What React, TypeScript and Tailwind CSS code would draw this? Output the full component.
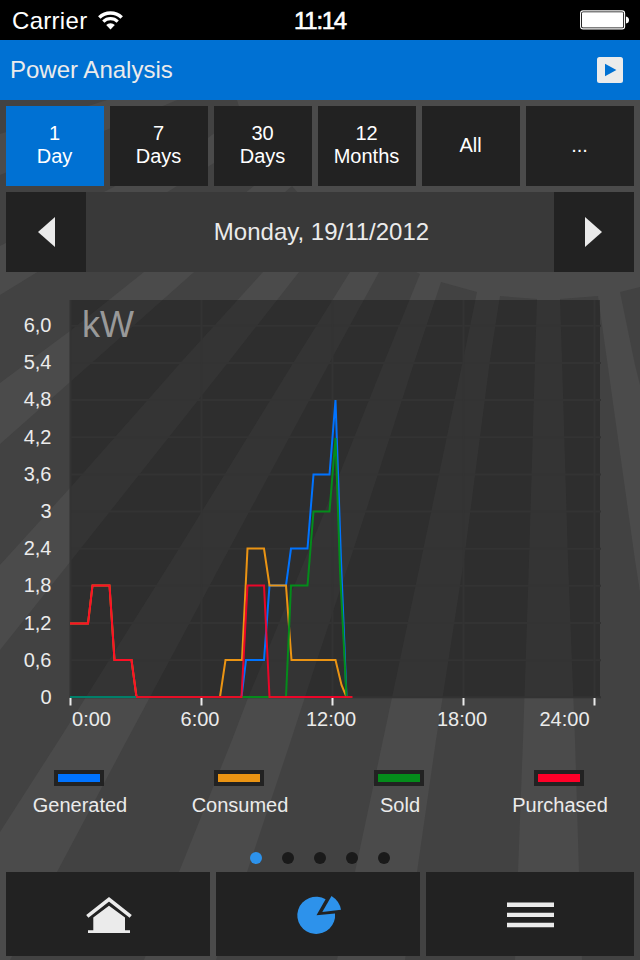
const rays = [
  "0,100 107,100 0,134",
  "0,175 177,100 237,100 241,113 208,138 0,246",
  "0,295 177,186 262,133 272,160 268,174 254,186 144,272 70,331 0,383",
  "194,272 292,186 315,212 263,272 183,360 70,488 0,565 0,444 95,360",
  "299,272 340,232 365,245 350,272 295,360 172,560 59,740 0,832 0,650 70,562 230,360",
  "379,272 390,258 420,274 385,360 320,523 248,698 232,740 179,872 144,960 10,960 57,872 127,740 234,540 331,360",
  "441,282 477,292 463,360 421,560 383,740 355,872 337,960 216,960 247,872 291,740 320,651 350,560 415,360",
  "500,296 537,299 535,360 529,560 523,740 518,872 515,960 405,960 417,872 436,740 464,560 490,360",
  "560,299 598,296 607,360 635,560 640,592 640,960 582,960 579,872 575,740 568,560 562,360",
  "620,292 640,287 640,385 635,365",
];

const yLabels = ["6,0", "5,4", "4,8", "4,2", "3,6", "3", "2,4", "1,8", "1,2", "0,6", "0"];

const xTicks = [
  { x: 70.5, label: "0:00", labelX: 91.5 },
  { x: 201.5, label: "6:00", labelX: 200 },
  { x: 332.5, label: "12:00", labelX: 331 },
  { x: 463.5, label: "18:00", labelX: 462 },
  { x: 594.5, label: "24:00", labelX: 564.5 },
];

const series = [
  {
    color: "#0073ff",
    points: "70,697 241.5,697 246,660 264,660 269.5,585.5 286,585.5 291,548.5 307.5,548.5 313.5,474.5 329.5,474.5 335.5,400 341,560 346.5,697 352,697",
  },
  {
    color: "#eb9413",
    points: "70,623.5 88,623.5 92.5,585.5 109.5,585.5 114.5,660 131.5,660 136.5,697 220,697 225.5,660 242,660 247.5,548.5 264,548.5 269.5,585.5 286,585.5 291.5,660 335.5,660 341.5,685 346.5,697 352,697",
  },
  {
    color: "#048c1b",
    points: "70,697 286,697 291,585.5 307.5,585.5 313.5,511.5 329.5,511.5 335.5,438 340,570 346.5,697 352,697",
  },
];

const redPoints =
  "70,623.5 88,623.5 92.5,585.5 109.5,585.5 114.5,660 131.5,660 136.5,697 241.5,697 247.5,585.5 264,585.5 269.5,697 352.5,697";

const ranges = [
  { top: "1", bottom: "Day", active: true },
  { top: "7", bottom: "Days" },
  { top: "30", bottom: "Days" },
  { top: "12", bottom: "Months" },
  { top: "All" },
  { top: "..." },
];

const legend = [
  { label: "Generated", fill: "bg-[#0073ff]" },
  { label: "Consumed", fill: "bg-[#eb9413]" },
  { label: "Sold", fill: "bg-[#048c1b]" },
  { label: "Purchased", fill: "bg-[#ff0028]" },
];

function Backdrop() {
  return (
    <svg className="absolute inset-0" width="640" height="960" viewBox="0 0 640 960">
      <rect width="640" height="960" fill="#4b4b4b" />
      {rays.map((p) => (
        <polygon key={p} points={p} fill="#424242" />
      ))}
    </svg>
  );
}

function StatusBar() {
  return (
    <div className="grid h-10 grid-cols-3 items-center bg-black text-white">
      <div className="flex items-center pl-3">
        <span className="w-[86px] pt-0.5 text-2xl leading-[38px] tracking-[0.3px]">Carrier</span>
        <svg width="25" height="19" viewBox="0 0 25 19" fill="none" stroke="#fff">
          <path d="M1.3 6.5 A16 16 0 0 1 23.7 6.5" strokeWidth="3.5" />
          <path d="M5.3 10.6 A10.3 10.3 0 0 1 19.7 10.6" strokeWidth="3.2" />
          <path d="M8.2 14 A6.1 6.1 0 0 1 16.8 14 L12.5 18.4 Z" fill="#fff" stroke="none" />
        </svg>
      </div>
      <div className="pt-0.5 text-center text-2xl leading-[38px] tracking-[-1.3px] [-webkit-text-stroke:0.6px_white]">11:14</div>
      <div className="flex justify-end pr-[11px]">
        <svg width="49" height="20" viewBox="0 0 49 20">
          <rect x="0.6" y="0.9" width="44" height="18" rx="2.5" fill="none" stroke="#fff" strokeWidth="1.1" />
          <rect x="2" y="2.2" width="41.2" height="15.4" rx="1" fill="#fff" />
          <path d="M46 6.5 Q49 7 49 10 T46 13.5 Z" fill="#fff" />
        </svg>
      </div>
    </div>
  );
}

function Chart() {
  return (
    <svg className="block" width="640" height="468" viewBox="0 272 640 468">
      <rect x="70" y="300" width="530" height="398" fill="#000" fillOpacity="0.3" />
      {yLabels.map((label, i) => (
        <g key={label}>
          <line x1="70" x2="601" y1={325.8 + i * 37.15} y2={325.8 + i * 37.15} stroke="#333" strokeWidth="2" />
          <text x="51.5" y={332 + i * 37.2} textAnchor="end" fontSize="20" fill="#ebebeb">
            {label}
          </text>
        </g>
      ))}
      {xTicks.map((t) => (
        <g key={t.label}>
          <line x1={t.x} x2={t.x} y1="300" y2="697" stroke="#333" strokeWidth="2" />
          <line x1={t.x} x2={t.x} y1="698" y2="705.5" stroke="#ebebeb" strokeWidth="2" />
          <text x={t.labelX} y="726" textAnchor="middle" fontSize="20" fill="#ebebeb">
            {t.label}
          </text>
        </g>
      ))}
      <text x="82" y="337" fontSize="36" fill="#999">
        kW
      </text>
      {series.map((s) => (
        <polyline key={s.color} points={s.points} fill="none" stroke={s.color} strokeWidth="2" />
      ))}
      <polyline points={redPoints} fill="none" stroke="#ff0028" strokeOpacity="0.9" strokeWidth="2" />
      <polyline points="70,697 136,697" fill="none" stroke="#00806a" strokeWidth="2" />
    </svg>
  );
}

export default function App() {
  return (
    <div className="relative h-[960px] w-[640px] overflow-hidden font-['Liberation_Sans',Arial,sans-serif] text-[#ebebeb]">
      <Backdrop />
      <div className="relative flex h-full flex-col">
        <StatusBar />
        <header className="flex h-[60px] items-center justify-between bg-[#0071d3] pr-[17px] pl-[10px]">
          <h1 className="text-2xl">Power Analysis</h1>
          <svg width="26" height="26" viewBox="0 0 26 26">
            <rect width="26" height="26" rx="2.5" fill="#ebebeb" />
            <path d="M8 6.8 L19.4 13 L8 19.2 Z" fill="#0071d3" />
          </svg>
        </header>

        <nav className="mt-1.5 grid h-20 grid-cols-[98px_98px_98px_98px_98px_108px] gap-1.5 px-1.5">
          {ranges.map((r) => (
            <button
              key={r.top}
              className={`flex flex-col items-center justify-center pr-px pb-0.5 text-xl leading-[23px] text-white ${r.active ? "bg-[#0071d3]" : "bg-[#222]"}`}
            >
              <span>{r.top}</span>
              {r.bottom && <span>{r.bottom}</span>}
            </button>
          ))}
        </nav>

        <div className="mx-1.5 mt-1.5 flex h-20 bg-[#393939]">
          <button className="flex w-20 items-center justify-center bg-[#222]">
            <svg width="17" height="30" viewBox="0 0 17 30">
              <path d="M17 0 V30 L0 15 Z" fill="#ebebeb" />
            </svg>
          </button>
          <div className="flex flex-1 items-center justify-center pl-[3px] text-2xl">Monday, 19/11/2012</div>
          <button className="flex w-20 items-center justify-center bg-[#222] pr-0.5">
            <svg width="17" height="30" viewBox="0 0 17 30">
              <path d="M0 0 V30 L17 15 Z" fill="#ebebeb" />
            </svg>
          </button>
        </div>

        <Chart />

        <div className="mt-[30px] grid grid-cols-4">
          {legend.map((l) => (
            <div key={l.label} className="flex flex-col items-center">
              <div className="mr-[2px] h-4 w-[50px] bg-[#222] p-1">
                <div className={`h-full w-full ${l.fill}`} />
              </div>
              <span className="mt-[5px] text-xl leading-7">{l.label}</span>
            </div>
          ))}
        </div>

        <div className="mt-[33px] flex justify-center gap-5">
          <span className="size-3 rounded-full bg-[#2d92eb]" />
          <span className="size-3 rounded-full bg-[#1a1a1a]" />
          <span className="size-3 rounded-full bg-[#1a1a1a]" />
          <span className="size-3 rounded-full bg-[#1a1a1a]" />
          <span className="size-3 rounded-full bg-[#1a1a1a]" />
        </div>

        <footer className="mt-2 grid h-[84px] grid-cols-[204px_204px_208px] gap-1.5 px-1.5">
          <button className="flex items-center justify-center bg-[#222]">
            <svg width="204" height="84" viewBox="6 872 204 84">
              <path d="M87.3 916.3 L109 899.3 L130.7 916.3" fill="none" stroke="#ebebeb" strokeWidth="3.6" />
              <path d="M93.3 917.5 L109 905.7 L125 917.5 V930.2 H130 V933 H88 V930.2 H93.3 Z" fill="#ebebeb" />
            </svg>
          </button>
          <button className="flex items-center justify-center bg-[#222]">
            <svg width="204" height="84" viewBox="216 872 204 84">
              <path d="M316.5 915.3 L325.6 899.2 A18.9 18.6 0 1 0 335 913.4 Z" fill="#2d92eb" />
              <path d="M322.3 912 L331.5 896 Q339.5 901 341 909.8 Z" fill="#2d92eb" />
            </svg>
          </button>
          <button className="flex flex-col items-center justify-center bg-[#222] pt-0.5">
            <svg width="47" height="26" viewBox="0 0 47 26">
              <path d="M0 2.7 H47 M0 12.9 H47 M0 23 H47" stroke="#ebebeb" strokeWidth="4.4" />
            </svg>
          </button>
        </footer>
      </div>
    </div>
  );
}
